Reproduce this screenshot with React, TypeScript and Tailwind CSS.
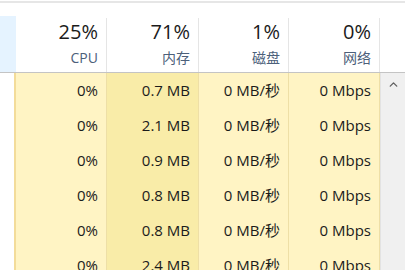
import { ChevronUp } from 'lucide-react';

const HEADERS = [
  { pct: '25%', label: 'CPU' },
  { pct: '71%', label: '内存' },
  { pct: '1%', label: '磁盘' },
  { pct: '0%', label: '网络' },
];

const ROWS = [
  ['0%', '0.7 MB', '0 MB/秒', '0 Mbps'],
  ['0%', '2.1 MB', '0 MB/秒', '0 Mbps'],
  ['0%', '0.9 MB', '0 MB/秒', '0 Mbps'],
  ['0%', '0.8 MB', '0 MB/秒', '0 Mbps'],
  ['0%', '0.8 MB', '0 MB/秒', '0 Mbps'],
  ['0%', '2.4 MB', '0 MB/秒', '0 Mbps'],
];

const WIDTHS = ['w-[91px]', 'w-[92px]', 'w-[90px]', 'w-[91px]'];
const BG = ['bg-[#fff4c4]', 'bg-[#f9eca8]', 'bg-[#fff4c4]', 'bg-[#fff4c4]'];

export default function App() {
  return (
    <div
      className="w-[405px] h-[270px] overflow-hidden bg-white flex flex-col"
      style={{ fontFamily: '"Open Sans", "Noto Sans CJK SC", sans-serif' }}
    >
      {/* top edge */}
      <div className="h-[2px] mt-[1px] bg-[#e6e6e6] flex-shrink-0" />

      {/* Header */}
      <div className="flex h-[70px] border-b border-[#c4c4c4] flex-shrink-0">
        <div className="w-[16px] mt-[13px] bg-[#e5f3ff]" />
        {HEADERS.map((h, i) => (
          <div key={h.label} className={`${WIDTHS[i]} flex flex-col`}>
            <div className="mt-[15px] flex-1 border-r border-[#e5e5e5] flex flex-col items-end pr-[8px]">
              <span className="text-[20px] leading-[28px] text-[#1b1b1b]">{h.pct}</span>
              <span className="text-[14px] leading-[20px] mt-[2px] text-[#4c607a]">{h.label}</span>
            </div>
          </div>
        ))}
        <div className="flex-1" />
      </div>

      {/* Body */}
      <div className="flex flex-1 min-h-0">
        <div className="flex flex-col">
          {ROWS.map((row, r) => (
            <div key={r} className="flex h-[35px] flex-shrink-0">
              <div className="w-[16px] bg-white border-r-2 border-[#f3dc9a]" />
              {row.map((cell, i) => (
                <div
                  key={i}
                  className={`${WIDTHS[i]} ${BG[i]} border-r border-[#eedfa6] flex items-center justify-end pr-[8px] text-[15px] text-[#1b1b1b]`}
                >
                  {cell}
                </div>
              ))}
            </div>
          ))}
        </div>
        <div className="flex-1 bg-[#f0f0f0] border-l border-[#e3e3e3] flex justify-center pt-[5px]">
          <ChevronUp className="w-[13px] h-[13px] text-[#606060]" strokeWidth={2.5} />
        </div>
      </div>
    </div>
  );
}
